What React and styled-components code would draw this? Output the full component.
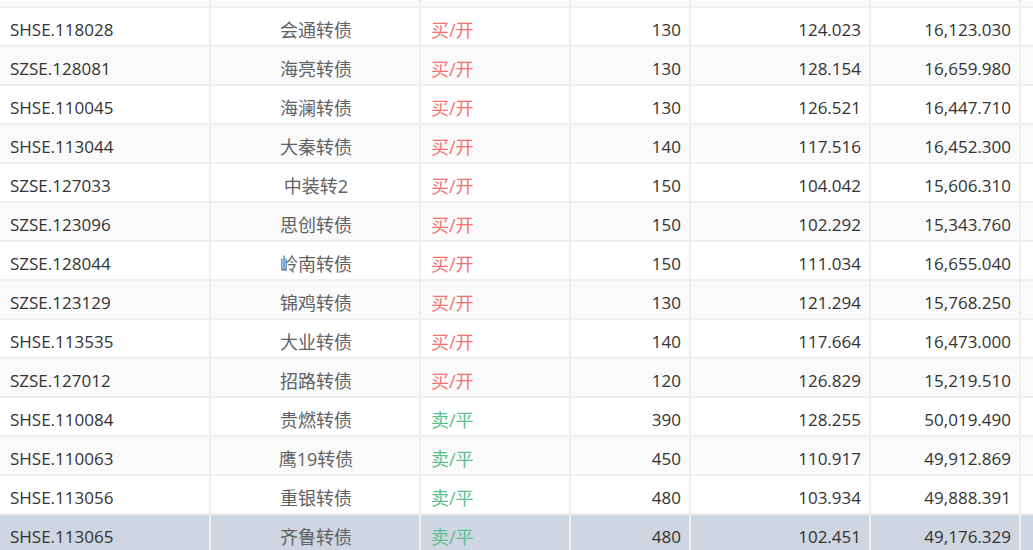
import React, { useLayoutEffect, useRef } from "react";
import styled, { createGlobalStyle } from "styled-components";

const GlobalStyle = createGlobalStyle`
  html, body { margin: 0; padding: 0; background: #ffffff; }
  body { font-family: "Open Sans", "Noto Sans CJK SC", sans-serif; }
`;

const Viewport = styled.div`
  height: 550px;
  width: 1033px;
  overflow-y: auto;
  overflow-x: hidden;
  scrollbar-width: none;
  &::-webkit-scrollbar { display: none; }
`;

const Table = styled.div`
  display: flex;
  flex-direction: column;
`;

const Row = styled.div`
  display: grid;
  grid-template-columns: 211px 210px 150px 120px 180px 150px 1fr;
  height: 39px;
  box-sizing: border-box;
  border-bottom: 2px solid #efefef;
  background: ${(p) => (p.$selected ? "#cfd5e1" : p.$striped ? "#fafafa" : "#ffffff")};
`;

const Cell = styled.div`
  box-sizing: border-box;
  border-right: 2px solid #efefef;
  padding: 10px 8px 3px 10px;
  line-height: 24px;
  font-size: ${(p) => (p.$cjk ? "18px" : "17px")};
  font-family: "Open Sans", "Noto Sans CJK SC", sans-serif;
  color: ${(p) => p.$color || "#333333"};
  text-align: ${(p) => p.$align || "left"};
  white-space: nowrap;
  overflow: hidden;
  &:last-child { border-right: none; }
`;

const Side = styled.span`
  color: ${(p) => (p.$buy ? "#f57272" : "#5cc08e")};
  font-size: 18px;
`;

const rows = [
  ["SHSE.118028", "会通转债", true, "130", "124.023", "16,123.030"],
  ["SZSE.128081", "海亮转债", true, "130", "128.154", "16,659.980"],
  ["SHSE.110045", "海澜转债", true, "130", "126.521", "16,447.710"],
  ["SHSE.113044", "大秦转债", true, "140", "117.516", "16,452.300"],
  ["SZSE.127033", "中装转2", true, "150", "104.042", "15,606.310"],
  ["SZSE.123096", "思创转债", true, "150", "102.292", "15,343.760"],
  ["SZSE.128044", "岭南转债", true, "150", "111.034", "16,655.040"],
  ["SZSE.123129", "锦鸡转债", true, "130", "121.294", "15,768.250"],
  ["SHSE.113535", "大业转债", true, "140", "117.664", "16,473.000"],
  ["SZSE.127012", "招路转债", true, "120", "126.829", "15,219.510"],
  ["SHSE.110084", "贵燃转债", false, "390", "128.255", "50,019.490"],
  ["SHSE.110063", "鹰19转债", false, "450", "110.917", "49,912.869"],
  ["SHSE.113056", "重银转债", false, "480", "103.934", "49,888.391"],
  ["SHSE.113065", "齐鲁转债", false, "480", "102.451", "49,176.329"],
];

function EmptyRow({ striped }) {
  return (
    <Row $striped={striped}>
      <Cell />
      <Cell />
      <Cell />
      <Cell />
      <Cell />
      <Cell />
      <Cell />
    </Row>
  );
}

export default function App() {
  const ref = useRef(null);
  useLayoutEffect(() => {
    if (ref.current) ref.current.scrollTop = 31;
  }, []);
  return (
    <>
      <GlobalStyle />
      <Viewport ref={ref}>
        <Table>
          <EmptyRow striped />
          {rows.map((r, i) => (
            <Row key={r[0]} $striped={i % 2 === 1} $selected={i === rows.length - 1}>
              <Cell>{r[0]}</Cell>
              <Cell $cjk $align="center" $color="#606266">{r[1]}</Cell>
              <Cell $cjk>
                <Side $buy={r[2]}>{r[2] ? "买/开" : "卖/平"}</Side>
              </Cell>
              <Cell $align="right">{r[3]}</Cell>
              <Cell $align="right">{r[4]}</Cell>
              <Cell $align="right">{r[5]}</Cell>
              <Cell />
            </Row>
          ))}
          <EmptyRow striped />
        </Table>
      </Viewport>
    </>
  );
}
